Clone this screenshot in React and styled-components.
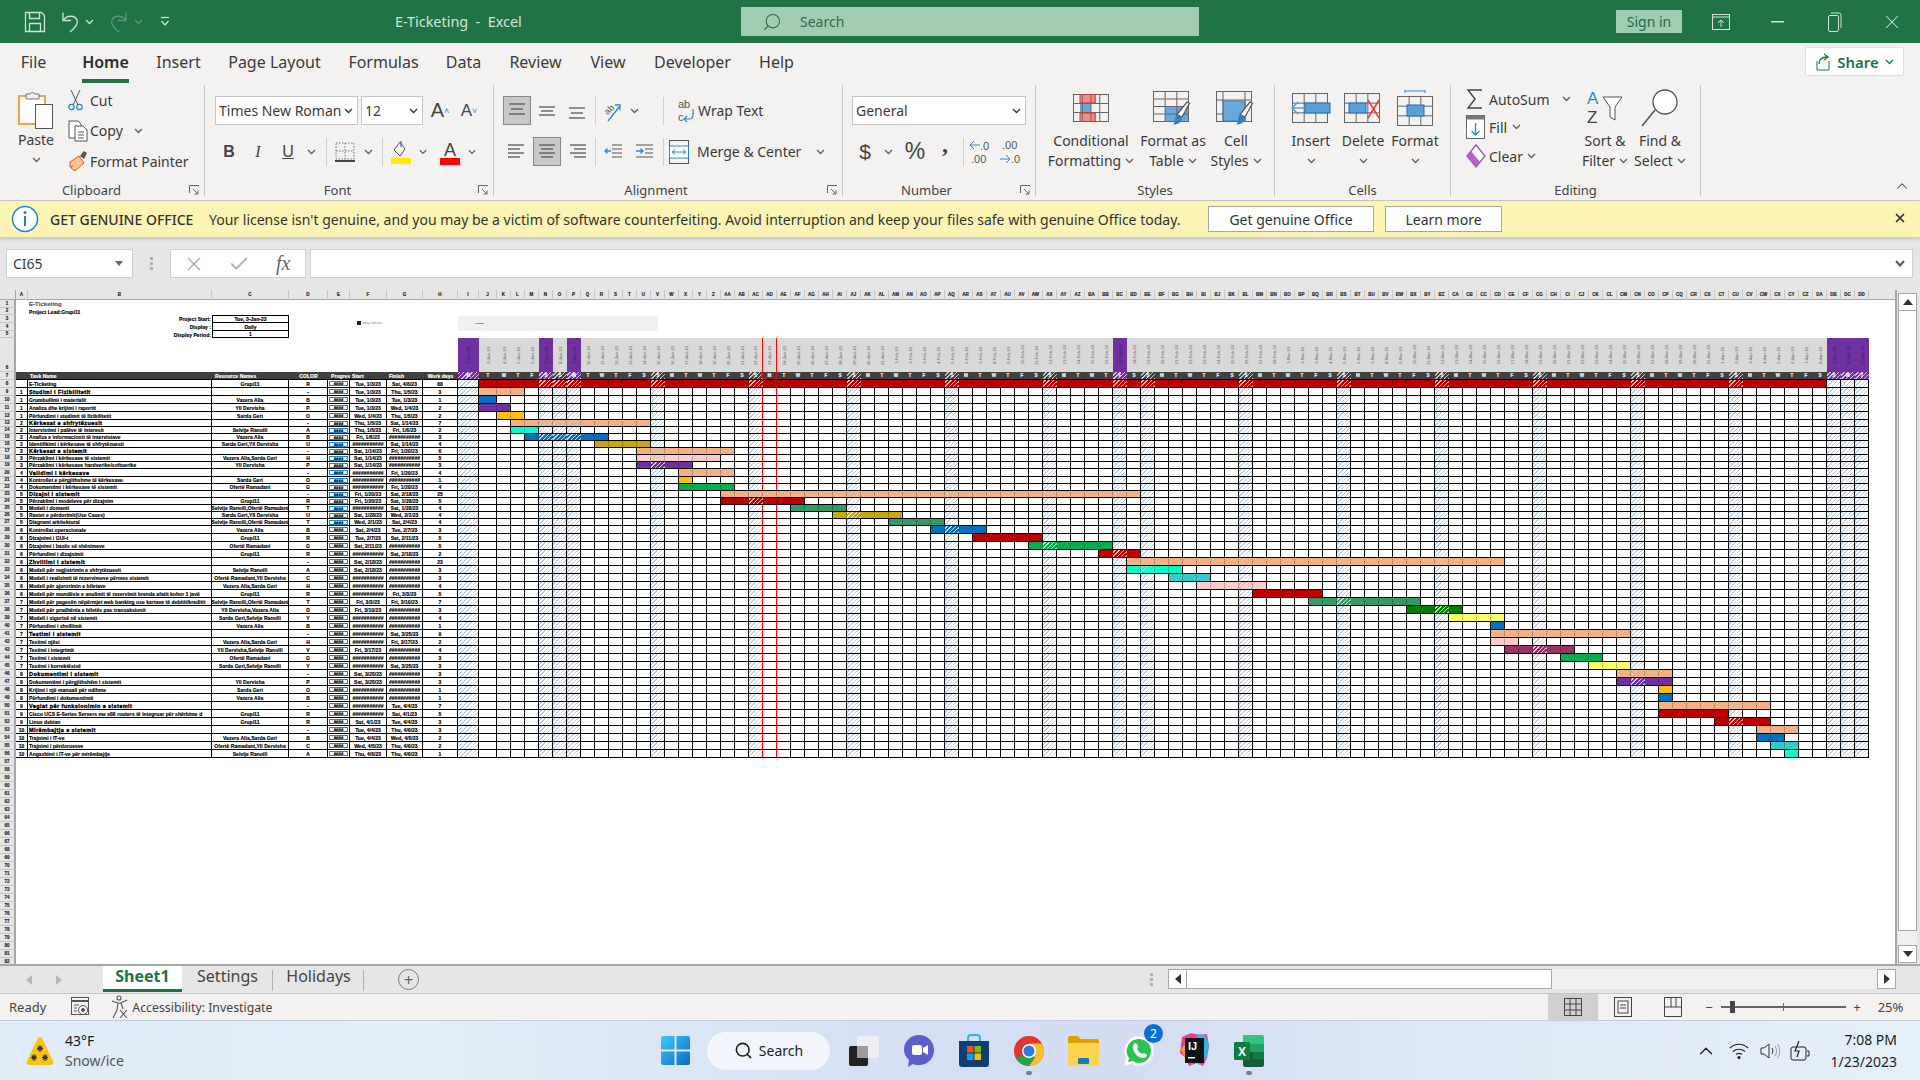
import React from 'react';
import styled, { createGlobalStyle, css } from 'styled-components';
import { X, Check, Search as SearchIcon, ChevronUp } from 'lucide-react';

const UI = `"Noto Sans", "Open Sans", sans-serif`;
const CELL = `"Liberation Sans", Arial, sans-serif`;

const GlobalStyle = createGlobalStyle`
  html, body { margin: 0; padding: 0; background: #fff; }
  * { box-sizing: border-box; }
  #root { width: 1920px; height: 1080px; overflow: hidden; }
`;

const Page = styled.div`
  width: 1920px; height: 1080px; display: flex; flex-direction: column;
  font-family: ${UI}; color: #3b3a39; overflow: hidden;
`;
const Spacer = styled.span`
  width: ${p => p.$w}px; flex: none;
`;

/* ---------- title bar ---------- */
const TitleBar = styled.div`
  height: 43px; flex: none; background: #217346; color: #d5e6dc; display: flex; align-items: center;
`;
const QuickAccess = styled.div`
  width: 395px; flex: none; padding-left: 24px; display: flex; align-items: center; gap: 5px;
`;
const TitleText = styled.div`
  width: 346px; flex: none; font-size: 14.4px; white-space: pre;
`;
const SearchBox = styled.div`
  width: 458px; height: 29px; flex: none; background: #a0cdb2; color: #2d6a48; display: flex; align-items: center;
  gap: 18px; padding-left: 21px; font-size: 14px;
`;
const MirroredSearch = styled(SearchIcon)`
  transform: scaleX(-1);
`;
const SignIn = styled.div`
  margin-left: auto; width: 66px; height: 23px; background: #a0cdb2; color: #1f6a42; font-size: 14px;
  display: flex; align-items: center; justify-content: center;
`;
const WinButton = styled.div`
  width: 57px; flex: none; display: flex; align-items: center; justify-content: center;
  margin-left: ${p => p.$ml || 0}px;
`;

/* ---------- ribbon ---------- */
const Ribbon = styled.div`
  height: 158px; flex: none; background: #f3f2f1; display: flex; flex-direction: column;
  border-bottom: 1px solid #c8c6c4;
`;
const TabRow = styled.div`
  height: 42px; flex: none; display: flex; align-items: center; padding-left: 21px; gap: 28px; position: relative;
`;
const RibbonTab = styled.div`
  width: ${p => p.$w}px; flex: none; margin-right: ${p => p.$mr || 0}px; height: 36px; margin-top: 1px; white-space: nowrap;
  font-size: 16px; line-height: 30px; display: flex; justify-content: center;
  ${p => p.$active && css`font-weight: 600; color: #2b2a29; border-bottom: 4px solid #217346;`}
`;
const ShareButton = styled.div`
  position: absolute; right: 16px; top: 4px; width: 99px; height: 29px; background: #fff; border: 1px solid #e1dfdd;
  border-radius: 2px; display: flex; align-items: center; justify-content: center; gap: 6px; color: #217346;
  font-size: 15px; font-weight: 600;
`;
const Groups = styled.div`
  flex: 1; display: flex; align-items: flex-start; position: relative;
`;
const Group = styled.div`
  width: ${p => p.$w}px; height: 111px; flex: none; display: flex; flex-direction: column; position: relative;
  border-right: 1px solid #c8c6c4; padding-left: ${p => p.$pl || 0}px;
`;
const GroupBody = styled.div`
  flex: 1; display: flex; flex-direction: ${p => (p.$col ? 'column' : 'row')}; min-height: 0;
`;
const GroupLabel = styled.div`
  height: 20px; flex: none; margin: 0 ${p => p.$pr || 0}px -4px ${p => -(p.$pl || 0)}px; text-align: center; font-size: 13px; line-height: 20px; color: #444;
`;
const Launcher = styled.svg`
  position: absolute; right: 4px; bottom: 0;
`;
const PasteColumn = styled.div`
  width: 48px; flex: none; display: flex; flex-direction: column; align-items: center; font-size: 14px; padding-top: 5px;
`;
const BigLabel = styled.div`
  height: 20px; line-height: 20px; white-space: nowrap; font-size: 14px; display: flex; align-items: center; gap: 4px; justify-content: center;
`;
const SmallColumn = styled.div`
  flex: none; width: ${p => p.$w}px; margin-left: ${p => p.$ml || 0}px; display: flex; flex-direction: column;
`;
const SmallRow = styled.div`
  height: ${p => p.$h || 29}px; flex: none; display: flex; align-items: center; font-size: 14px; white-space: nowrap;
`;
const IconSlot = styled.div`
  width: ${p => p.$w}px; flex: none; display: flex; align-items: center;
`;
const ToolRow = styled.div`
  height: 29px; flex: none; display: flex; align-items: center; margin-top: ${p => p.$mt || 0}px;
`;
const Ctl = styled.div`
  width: ${p => p.$w}px; height: 29px; flex: none; margin-left: ${p => p.$ml || 0}px; display: flex; align-items: center;
  justify-content: ${p => (p.$start ? 'flex-start' : 'center')}; padding-left: ${p => p.$pl || 0}px;
  font-size: 14px; white-space: nowrap;
  ${p => p.$active && css`background: #c8c8c8; border: 1px solid #8a8886;`}
`;
const Glyph = styled.span`
  font-family: ${p => (p.$serif ? '"Liberation Serif", serif' : CELL)}; font-size: ${p => p.$s || 15}px; font-weight: ${p => (p.$b ? 700 : 400)};
  font-style: ${p => (p.$i ? 'italic' : 'normal')}; text-decoration: ${p => (p.$u ? 'underline' : 'none')}; color: ${p => p.$c || '#444'};
`;
const CommaGlyph = styled(Glyph)`
  line-height: 20px; margin-bottom: 16px;
`;
const VSep = styled.div`
  width: 1px; height: 28px; flex: none; background: #d2d0ce; margin-left: ${p => p.$ml || 0}px;
`;
const SelectBox = styled.div`
  width: ${p => p.$w}px; height: 29px; flex: none; margin-left: ${p => p.$ml || 0}px; background: #fff; border: 1px solid #c8c6c4; display: flex; align-items: center;
  justify-content: space-between; padding: 0 4px 0 3px; font-size: 14px; white-space: nowrap;
`;
const BigButton = styled.div`
  width: ${p => p.$w}px; flex: none; margin-left: ${p => p.$ml || 0}px; display: flex; flex-direction: column; align-items: center;
`;
const BigIcon = styled.div`
  height: 46px; flex: none; display: flex; align-items: center; justify-content: center;
`;
const CollapseButton = styled.div`
  position: absolute; right: 9px; bottom: 5px; color: #444; display: flex;
`;

/* ---------- message bar ---------- */
const MessageBar = styled.div`
  height: 36px; flex: none; background: #fcf4b5; display: flex; align-items: center; padding-left: 11px; font-size: 14px; color: #333;
  box-shadow: 0 2px 3px rgba(0,0,0,.15); position: relative; white-space: nowrap; z-index: 1;
`;
const Strong = styled.span`
  font-weight: 500; margin-left: 11px; margin-right: 12px; width: 147px; flex: none;
`;
const MessageText = styled.span`
  width: 988px; flex: none;
`;
const MessageButton = styled.div`
  width: ${p => p.$w}px; height: 26px; flex: none; margin-left: ${p => p.$ml}px; background: #fff; border: 1px solid #a6a6a6;
  display: flex; align-items: center; justify-content: center;
`;
const MessageClose = styled.div`
  position: absolute; right: 13px; top: 10px; display: flex; color: #333;
`;

/* ---------- formula bar ---------- */
const FormulaBar = styled.div`
  height: 53px; flex: none; background: #e6e6e6; display: flex; align-items: flex-start; padding: 12px 7px 0 6px;
`;
const NameBox = styled.div`
  width: 127px; height: 29px; flex: none; background: #fff; border: 1px solid #d2d0ce; display: flex; align-items: center;
  justify-content: space-between; padding: 0 9px 0 6px; font-size: 14px;
`;
const Caret = styled.span`
  width: 0; height: 0; border-left: 4px solid transparent; border-right: 4px solid transparent; border-top: 5px solid #666;
`;
const Dots = styled.div`
  width: 37px; height: 29px; flex: none; display: flex; flex-direction: column; align-items: center; justify-content: center; gap: 2px;
  & > i { width: 3px; height: 3px; background: #b3b0ad; }
`;
const FxBox = styled.div`
  width: 136px; height: 29px; flex: none; background: #fff; border: 1px solid #d2d0ce; display: flex; align-items: center; gap: 23px;
  padding-left: 12px; color: #b3b0ad;
`;
const Fx = styled.span`
  font-family: "Liberation Serif", serif; font-style: italic; font-size: 20px; color: #666; margin-left: 3px;
`;
const FormulaInput = styled.div`
  flex: 1; height: 29px; margin-left: 4px; background: #fff; border: 1px solid #d2d0ce; display: flex; align-items: center; justify-content: flex-end; padding-right: 7px;
`;

/* ---------- sheet ---------- */
const SheetArea = styled.div`
  flex: 1; min-height: 0; display: flex; background: #e6e6e6;
`;
const Sheet = styled.div`
  width: 1895px; flex: none; background: #fff; display: flex; flex-direction: column; overflow: hidden; position: relative;
  font-family: ${CELL}; font-size: 5px; font-weight: 700; color: #000; -webkit-text-stroke-width: .15px; letter-spacing: .05px;
`;
const GridRow = styled.div`
  height: ${p => p.$h}px; flex: none; display: flex;
`;
const Corner = styled.div`
  width: 16px; flex: none; background: #e6e6e6; border-right: 1px solid #a6a6a6; border-bottom: 1px solid #a6a6a6;
`;
const ColHead = styled.div`
  width: ${p => p.$w}px; flex: none; background: #e6e6e6; border-right: 1px solid #c8c6c4; border-bottom: 1px solid #a6a6a6;
  display: flex; align-items: center; justify-content: center; font-size: 4.5px; overflow: hidden; color: #222;
`;
const ColFiller = styled.div`
  flex: 1; background: #e6e6e6; border-bottom: 1px solid #a6a6a6;
`;
const RowHead = styled.div`
  width: 16px; flex: none; background: #e6e6e6; border-right: 2px solid #a6a6a6; border-bottom: 1px solid #c8c6c4;
  display: flex; align-items: flex-end; justify-content: center; font-size: 4.5px; line-height: 6px; color: #222;
`;
const Plain = styled.div`
  width: ${p => p.$w}px; flex: none; display: flex; align-items: center; white-space: nowrap; overflow: visible; padding: 0 1px;
  justify-content: ${p => p.$align || 'flex-start'}; font-size: ${p => p.$fs || 5}px; color: ${p => p.$c || '#000'};
`;
const SetupBox = styled.div`
  width: ${p => p.$w}px; flex: none; border: 1px solid #000; border-top-width: ${p => (p.$first ? 1 : 0)}px; display: flex; align-items: center; justify-content: center;
`;
const Legend = styled.div`
  position: absolute; left: 357px; top: 31px; display: flex; align-items: center; gap: 1px; font-size: 3px; font-weight: 400; color: #888; -webkit-text-stroke-width: 0;
  & > i { width: 4px; height: 4px; background: #222; }
`;
const SliderBand = styled.div`
  position: absolute; left: 458px; top: 26px; width: 200px; height: 15px; background: #f0f0f0;
  & > i { position: absolute; left: 17px; top: 7px; width: 9px; height: 1px; background: #999; }
`;
const Cell = styled.div`
  width: ${p => p.$w}px; flex: none; display: flex; align-items: center; white-space: nowrap; overflow: hidden;
  border-right: 1px solid #000; border-bottom: 1px solid #000; padding: 0 1px;
  justify-content: ${p => p.$align || 'center'};
  ${p => p.$big && css`font-size: 5.5px; letter-spacing: .42px; -webkit-text-stroke-width: .3px;`}
`;
const DataBar = styled.div`
  flex: 1; height: 5px; border: 1px solid #0a8fe8; display: flex; align-items: center; justify-content: center; font-size: 4px; letter-spacing: .2px; overflow: hidden; background: #fff;
`;
const DarkCell = styled.div`
  width: ${p => p.$w}px; flex: none; background: #404040; color: #fff; display: flex; align-items: center; white-space: nowrap; overflow: hidden; padding: 0 1px;
  justify-content: ${p => p.$align || 'flex-start'}; padding-left: ${p => p.$pl || 1}px; border-bottom: 1px solid #000;
`;
const hatch = c => `repeating-linear-gradient(-45deg, ${c} 0 1px, transparent 1px 3px)`;
const DateCell = styled.div`
  width: ${p => p.$w}px; flex: none; background: ${p => (p.$holiday ? '#7030a0' : '#d9d9d9')};
  display: flex; align-items: center; justify-content: center; overflow: hidden; -webkit-text-stroke-width: 0;
  font-size: 4px; color: ${p => (p.$holiday ? '#3a2a60' : '#857d92')};
  ${p => p.$today && 'border-right: 1px solid #f00;'}
  & > span { writing-mode: vertical-rl; transform: rotate(180deg); white-space: nowrap; }
`;
const DayLetter = styled.div`
  width: ${p => p.$w}px; flex: none; background-color: ${p => (p.$holiday ? '#7030a0' : '#404040')}; color: #fff;
  background-image: ${p => (p.$hatch ? hatch('rgba(255,255,255,.7)') : 'none')};
  display: flex; align-items: center; justify-content: center; font-size: 4.5px; border-bottom: 1px solid #000;
  ${p => p.$today && 'border-right: 1px solid #f00;'}
`;
const DayCell = styled.div`
  width: ${p => p.$w}px; flex: none; border-bottom: 1px solid #000;
  border-right: 1px solid ${p => (p.$bar ? 'rgba(0,0,0,.22)' : p.$today ? '#f00' : '#000')};
  background-color: ${p => p.$bar || '#fff'};
  background-image: ${p => (p.$hatch ? hatch(p.$bar ? p.$hatchColor : '#bcd5ec') : 'none')};
  ${p => p.$end && 'border-right-color: #000;'}
`;

/* ---------- scrollbars ---------- */
const VScroll = styled.div`
  width: 25px; flex: none; border-left: 2px solid #a6a6a6; padding: 3px 0 1px 1px; display: flex; flex-direction: column;
`;
const ScrollButton = styled.div`
  width: 19px; height: ${p => p.$h || 18}px; flex: none; background: #fff; border: 1px solid #a6a6a6; display: flex; align-items: center; justify-content: center;
`;
const Triangle = styled.span`
  width: 0; height: 0; border-style: solid; border-color: transparent;
  ${p => p.$dir === 'up' && 'border-width: 0 5px 6px; border-bottom-color: #333;'}
  ${p => p.$dir === 'down' && 'border-width: 6px 5px 0; border-top-color: #333;'}
  ${p => p.$dir === 'left' && 'border-width: 5px 6px 5px 0; border-right-color: #333;'}
  ${p => p.$dir === 'right' && 'border-width: 5px 0 5px 6px; border-left-color: #333;'}
`;
const VThumb = styled.div`
  width: 19px; height: 620px; flex: none; background: #fff; border: 1px solid #a6a6a6; border-top: 0;
`;
const VTrack = styled.div`
  width: 19px; flex: 1; background: #f0f0f0;
`;

/* ---------- sheet tabs ---------- */
const TabsBar = styled.div`
  height: 29px; flex: none; background: #e6e6e6; border-top: 2px solid #a6a6a6; display: flex; align-items: flex-start; padding-right: 24px;
`;
const TabNav = styled.div`
  width: 103px; height: 27px; flex: none; display: flex; align-items: center; gap: 24px; padding-left: 26px; opacity: .25;
`;
const SheetTab = styled.div`
  width: ${p => p.$w}px; height: 26px; flex: none; display: flex; align-items: center; justify-content: center; font-size: 16px; color: #444; padding-bottom: 6px;
  ${p => p.$active && css`background: #fff; color: #217346; font-weight: 700; border-bottom: 3px solid #217346; padding-bottom: 3px;`}
  ${p => p.$sep && css`
    position: relative;
    &::after { content: ""; position: absolute; right: 0; top: 4px; height: 21px; width: 1px; background: #b3b0ad; }
  `}
`;
const AddSheet = styled.div`
  width: 21px; height: 21px; margin: 3px 0 0 34px; flex: none; border: 1.5px solid #7a7a7a; border-radius: 50%; display: flex; align-items: center; justify-content: center;
  font-size: 17px; line-height: 1; color: #666;
`;
const TabDots = styled.div`
  margin: 7px 15px 0 auto; display: flex; flex-direction: column; gap: 2px;
  & > i { width: 3px; height: 3px; background: #b3b0ad; }
`;
const HScroll = styled.div`
  width: 728px; height: 20px; margin-top: 3px; flex: none; background: #f0f0f0; display: flex; justify-content: space-between;
`;
const HLeft = styled.div`
  display: flex;
`;
const HButton = styled.div`
  width: 19px; flex: none; background: #fff; border: 1px solid #a6a6a6; display: flex; align-items: center; justify-content: center;
`;
const HThumb = styled.div`
  width: 365px; flex: none; background: #fff; border: 1px solid #a6a6a6; border-left: 0;
`;

/* ---------- status bar ---------- */
const StatusBar = styled.div`
  height: 27px; flex: none; background: #f3f2f1; border-top: 1px solid #c8c6c4; display: flex; align-items: center; font-size: 13px; padding: 0 17px 0 9px; color: #444;
`;
const StatusItem = styled.div`
  margin-left: ${p => p.$ml || 0}px; display: flex; align-items: center; gap: 3px; white-space: nowrap;
  ${p => p.$w && css`width: ${p.$w}px; flex: none; justify-content: center;`}
`;
const AccessText = styled.span`
  font-size: 12.3px;
`;
const ViewButtons = styled.div`
  margin-left: auto; display: flex;
`;
const ViewButton = styled.div`
  width: 50px; height: 26px; flex: none; display: flex; align-items: center; justify-content: center;
  ${p => p.$active && 'background: #d2d0ce;'}
`;
const ZoomSlider = styled.div`
  width: 125px; height: 2px; margin-left: 8px; background: #666; position: relative; flex: none;
  & > b { position: absolute; left: 9px; top: -5px; width: 5px; height: 12px; background: #444; }
  & > i { position: absolute; left: 62px; top: -3px; width: 1px; height: 8px; background: #666; }
`;

/* ---------- taskbar ---------- */
const Taskbar = styled.div`
  height: 60px; flex: none; display: flex; align-items: center; color: #1c1c1c;
  background: linear-gradient(90deg, #dfebf7 0%, #e3eef8 22%, #d5e0f5 45%, #d3dcf3 58%, #dfe8f6 75%, #e5f0f9 100%);
  border-top: 1px solid #c3ccd8;
`;
const Weather = styled.div`
  width: 647px; flex: none; display: flex; align-items: center; padding-left: 25px; gap: 10px;
`;
const WeatherText = styled.div`
  font-size: 14px; line-height: 20px; & > span { display: block; color: #555; }
`;
const TaskIcon = styled.div`
  width: ${p => p.$w || 55}px; height: 60px; flex: none; display: flex; align-items: center; justify-content: center; position: relative;
  ${p => p.$running && css`&::after { content: ""; position: absolute; bottom: 6px; left: 50%; margin-left: -3px; width: 6px; height: 4px; border-radius: 2px; background: #7a7f87; }`}
`;
const SearchPill = styled.div`
  width: 123px; height: 38px; margin: 0 6px 0 4px; flex: none; border-radius: 19px; background: #f2f6fc; display: flex; align-items: center; justify-content: center; gap: 6px;
  font-size: 14px;
`;
const Badge = styled.div`
  position: absolute; top: 3px; right: 3px; width: 19px; height: 19px; border-radius: 50%; background: #0a6fd0; color: #fff; font-size: 12px; display: flex; align-items: center; justify-content: center;
`;
const Tray = styled.div`
  margin-left: auto; display: flex; align-items: center; padding-right: 23px;
`;
const TrayIcon = styled.div`
  width: ${p => p.$w}px; flex: none; display: flex; justify-content: center;
`;
const Clock = styled.div`
  width: 73px; margin-left: 7px; text-align: right; font-size: 14px; line-height: 22px; white-space: nowrap;
`;

/* ---------- drawn icons ---------- */
const BLUE = '#2b88d8';
const Chevron = ({ c = '#605e5c' }) => (
  <svg width="9" height="6" viewBox="0 0 9 6"><polyline points="1,1 4.5,4.5 8,1" fill="none" stroke={c} strokeWidth="1.3" /></svg>
);
const Save = () => (
  <svg width="22" height="22" viewBox="0 0 22 22" fill="none" stroke="#cfe3d8" strokeWidth="1.3"><path d="M1.5 1.5h16l3 3v16h-19z" /><path d="M5.5 1.5v6h10v-6M5.5 20.5v-8h11v8" /></svg>
);
const Undo = ({ c = '#cfe3d8', flip }) => (
  <svg width="20" height="22" viewBox="0 0 20 22" fill="none" stroke={c} strokeWidth="1.3">
    <g transform={flip ? 'translate(20 0) scale(-1 1)' : undefined}><path d="M3 1.5v8h8" /><path d="M3.5 9C7 4 15 4 17 9c1.5 4-2 8-7 12" /></g>
  </svg>
);
const Customize = () => (
  <svg width="10" height="12" viewBox="0 0 10 12" fill="none" stroke="#cfe3d8" strokeWidth="1.2"><path d="M1 1.5h8" /><polyline points="1.5,5 5,9 8.5,5" /></svg>
);
const Launch = () => (
  <Launcher width="11" height="11" viewBox="0 0 11 11" fill="none" stroke="#666"><path d="M.5 8V.5H10" /><path d="M4 4l5 5M9 5.5V9H5.5" /></Launcher>
);
const PasteIcon = () => (
  <svg width="36" height="40" viewBox="0 0 36 40">
    <rect x="1" y="6" width="26" height="28" fill="#fff" stroke="#e8a54b" strokeWidth="2" />
    <path d="M8 9V4h4a3 3 0 0 1 5 0h4v5z" fill="#f3f2f1" stroke="#777" />
    <rect x="17.5" y="14.5" width="17" height="24" fill="#fff" stroke="#555" />
  </svg>
);
const CutIcon = () => (
  <svg width="15" height="22" viewBox="0 0 15 22" fill="none"><path d="M3 1l7 15M12 1L5 16" stroke="#555" /><circle cx="3.5" cy="18" r="2.7" stroke={BLUE} strokeWidth="1.3" /><circle cx="11.5" cy="18" r="2.7" stroke={BLUE} strokeWidth="1.3" /></svg>
);
const CopyIcon = () => (
  <svg width="21" height="22" viewBox="0 0 21 22" fill="#fff" stroke="#555"><path d="M1 1h9l3 3v14H1z" /><path d="M7 6h8l4 4v11H7z" /><path d="M10 12h6M10 15h6M10 18h6" /></svg>
);
const BrushIcon = () => (
  <svg width="20" height="22" viewBox="0 0 20 22"><path d="M2 12l9-6 5 7-9 8-4-3 2-2-3 1z" fill="#f9c58f" stroke="#d9601f" /><path d="M12 6l4-5 3 2-3 6z" fill="#555" /></svg>
);
const Lines = ({ rows, w = 20 }) => (
  <svg width={w} height="18" viewBox={`0 0 ${w} 18`} stroke="#555" strokeWidth="1.3">
    {rows.map(([a, b, y], i) => <line key={i} x1={a} x2={b} y1={y} y2={y} />)}
  </svg>
);
const OrientIcon = () => (
  <svg width="22" height="22" viewBox="0 0 22 22" fill="none">
    <text x="3" y="13" fontSize="9" fontFamily="Liberation Sans" fill="#555" transform="rotate(-45 7 11)">ab</text>
    <path d="M6 21L18 6M13 5h5v5" stroke={BLUE} strokeWidth="1.3" />
  </svg>
);
const WrapIcon = () => (
  <svg width="18" height="26" viewBox="0 0 18 26" fill="none">
    <text x="1" y="10" fontSize="11" fontFamily="Liberation Sans" fill="#555">ab</text>
    <text x="1" y="23" fontSize="11" fontFamily="Liberation Sans" fill="#555">c</text>
    <path d="M16 11v6q0 4-4 4H8M10 18l-3 3 3 3" stroke={BLUE} strokeWidth="1.2" />
  </svg>
);
const IndentIcon = ({ out }) => (
  <svg width="19" height="18" viewBox="0 0 19 18" fill="none">
    <path d={out ? 'M8 2h10M8 6h10M8 10h10M8 14h10' : 'M1 2h17M10 6h8M10 10h8M1 14h17'} stroke="#555" strokeWidth="1.2" />
    <path d={out ? 'M7 8H1M3.5 5.5L1 8l2.5 2.5' : 'M1 8h7M5.500 5.500L8 8l-2.500 2.500'} stroke={BLUE} strokeWidth="1.3" />
  </svg>
);
const MergeIcon = () => (
  <svg width="20" height="24" viewBox="0 0 20 24" fill="none"><rect x=".5" y=".5" width="19" height="23" stroke="#555" /><rect x=".5" y="6" width="19" height="12" fill="#fff" stroke={BLUE} /><path d="M3 12h14M6 9.5L3 12l3 2.5M14 9.5l3 2.5-3 2.5" stroke={BLUE} /></svg>
);
const BorderIcon = () => (
  <svg width="20" height="20" viewBox="0 0 20 20" fill="none"><path d="M1 1h18v16H1zM10 1v16M1 9h18" stroke="#777" strokeDasharray="1.5 1.5" /><path d="M0 19h20" stroke="#444" strokeWidth="2" /></svg>
);
const FillIcon = () => (
  <svg width="20" height="24" viewBox="0 0 20 24" fill="none"><path d="M9 2L3 10l6 6 5-7z" stroke="#555" /><path d="M10 1v6" stroke="#555" /><rect x="0" y="18" width="20" height="6" fill="#ffea00" /></svg>
);
const FontColor = () => (
  <svg width="20" height="26" viewBox="0 0 20 26"><text x="10" y="17" textAnchor="middle" fontSize="18" fontFamily="Liberation Sans" fill="#444">A</text><rect x="0" y="19" width="20" height="7" fill="#f00" /></svg>
);
const DecIcon = ({ inc }) => (
  <svg width="22" height="26" viewBox="0 0 22 26" fontSize="11" fontFamily="Liberation Sans" fill="#555">
    {inc ? <><text x="3" y="10">.00</text><text x="12" y="24">.0</text><path d="M1 20h10M7 16l4 4-4 4" fill="none" stroke={BLUE} /></>
      : <><path d="M12 6H2M6 2L2 6l4 4" fill="none" stroke={BLUE} /><text x="12" y="11">.0</text><text x="3" y="24">.00</text></>}
  </svg>
);
const TableGrid = ({ x = 0, y = 0, w, h, cols, rows }) => (
  <g stroke="#666" fill="none">
    <rect x={x + .5} y={y + .5} width={w} height={h} />
    {Array.from({ length: cols - 1 }, (_, i) => <line key={i} x1={x + .5 + (w * (i + 1)) / cols} x2={x + .5 + (w * (i + 1)) / cols} y1={y} y2={y + h} />)}
    {Array.from({ length: rows - 1 }, (_, i) => <line key={i} y1={y + .5 + (h * (i + 1)) / rows} y2={y + .5 + (h * (i + 1)) / rows} x1={x} x2={x + w} />)}
  </g>
);
const MiniBrush = ({ x, y }) => (
  <g transform={`translate(${x} ${y}) scale(1.25)`}><path d="M12 0l2 1-6 11-4-2z" fill="#fff" stroke="#555" /><path d="M4 10l4 2c0 4-3 6-7 6 2-2 1-6 3-8z" fill="#2f7fc1" /></g>
);
const CondIcon = () => (
  <svg width="36" height="28" viewBox="0 0 36 28">
    <rect x="7" y="0" width="16" height="9" fill="#f98a8a" /><rect x="7" y="19" width="16" height="9" fill="#f98a8a" /><rect x="7" y="10" width="11" height="9" fill="#6aa7dc" />
    <TableGrid w={35} h={27} cols={4} rows={3} />
    <path d="M7 0h15v9H7zM7 19h15v9H7z" fill="none" stroke="#d33" />
  </svg>
);
const TableIcon = () => (
  <svg width="40" height="36" viewBox="0 0 40 36">
    <rect x="12" y="16" width="23" height="15" fill="#6aa7dc" />
    <TableGrid y={1} w={35} h={30} cols={3} rows={4} />
    <MiniBrush x={19} y={12} />
  </svg>
);
const StylesIcon = () => (
  <svg width="40" height="36" viewBox="0 0 40 36">
    <rect x="7" y="11" width="22" height="20" fill="#6aa7dc" stroke={BLUE} />
    <rect x=".5" y="1.5" width="35" height="30" fill="none" stroke="#666" />
    <path d="M7 1v30M29 1v30M0 10h36M0 24h7" stroke="#666" fill="none" />
    <MiniBrush x={19} y={12} />
  </svg>
);
const InsertIcon = () => (
  <svg width="40" height="30" viewBox="0 0 40 30">
    <TableGrid w={35} h={29} cols={3} rows={3} x={1} />
    <rect x="14" y="10" width="25" height="10" fill="#5ba0d8" stroke="#1f6eb5" />
    <path d="M14 15H1M7 9l-6 6 6 6" fill="none" stroke="#5ba0d8" strokeWidth="1.5" />
  </svg>
);
const DeleteIcon = () => (
  <svg width="38" height="30" viewBox="0 0 38 30">
    <TableGrid w={35} h={29} cols={3} rows={3} />
    <rect x="5" y="10" width="17" height="10" fill="#5ba0d8" stroke="#1f6eb5" />
    <path d="M24 7l11 18M35 7L24 25" stroke="#ee3a3a" strokeWidth="1.5" />
  </svg>
);
const FormatIcon = () => (
  <svg width="36" height="36" viewBox="0 0 36 36">
    <path d="M8 1h20M8 0v3M28 0v3" stroke={BLUE} fill="none" />
    <TableGrid y={6} w={35} h={29} cols={3} rows={3} />
    <rect x="10" y="15" width="17" height="11" fill="#5ba0d8" stroke="#1f6eb5" />
  </svg>
);
const SigmaIcon = () => (
  <svg width="17" height="20" viewBox="0 0 17 20" fill="none" stroke="#444" strokeWidth="1.4"><path d="M15 2V1H2l7 9-7 9h13v-1" /></svg>
);
const FillDown = () => (
  <svg width="19" height="24" viewBox="0 0 19 24" fill="none"><rect x=".5" y=".5" width="18" height="23" fill="#fff" stroke="#666" /><rect x=".5" y=".5" width="18" height="4" fill="#777" /><path d="M9.5 8v12M5.5 16l4 4 4-4" stroke={BLUE} strokeWidth="1.3" /></svg>
);
const ClearIcon = () => (
  <svg width="20" height="24" viewBox="0 0 20 24" fill="none"><path d="M10 1l9 11-9 11-9-11z" stroke="#a24ab4" strokeWidth="1.3" fill="#fff" /><path d="M5 7l9 11-4 5-9-11z" fill="#b661c8" /></svg>
);
const SortIcon = () => (
  <svg width="38" height="38" viewBox="0 0 38 38" fontFamily="Liberation Sans" fontSize="17">
    <text x="1" y="15" fill={BLUE}>A</text><text x="1" y="34" fill="#444">Z</text>
    <path d="M17 8h19l-7 10v13l-5-3V18z" fill="#fff" stroke="#555" />
  </svg>
);
const FindIcon = () => (
  <svg width="40" height="38" viewBox="0 0 40 38" fill="none" stroke="#555"><circle cx="25" cy="13" r="12" fill="#fff" strokeWidth="1.3" /><path d="M15 21L2 37" strokeWidth="1.6" /></svg>
);
const InfoIcon = () => (
  <svg width="28" height="28" viewBox="0 0 28 28" fill="#fff" stroke="#1a86d0" strokeWidth="1.5"><circle cx="14" cy="14" r="12.5" /><path d="M14 11v10" strokeWidth="2" /><circle cx="14" cy="7.5" r=".8" strokeWidth="1.5" /></svg>
);
const ShareIcon = () => (
  <svg width="16" height="19" viewBox="0 0 16 19" fill="none" stroke="#217346"><path d="M2 9v9h12V9" /><path d="M4 12c0-5 3-7 8-7M9 2l4 3-4 3" strokeWidth="1.3" /></svg>
);
const WinGrid = () => (
  <svg width="18" height="18" viewBox="0 0 18 18" fill="none" stroke="#444"><rect x=".5" y=".5" width="17" height="17" /><path d="M6 0v18M12 0v18M0 6h18M0 12h18" /></svg>
);
const PageIcon = () => (
  <svg width="18" height="20" viewBox="0 0 18 20" fill="none" stroke="#444"><rect x=".5" y=".5" width="17" height="19" /><rect x="4" y="4" width="10" height="12" /><path d="M6 8h6M6 11h6" /></svg>
);
const BreakIcon = () => (
  <svg width="18" height="20" viewBox="0 0 18 20" fill="none" stroke="#444"><path d="M.5.5h17v19H.5zM.5 10h17M7 .5V10M12 .5V10" /></svg>
);
const MacroIcon = () => (
  <svg width="18" height="20" viewBox="0 0 18 20" fill="none" stroke="#555"><rect x=".5" y=".5" width="17" height="17" /><path d="M0 4h18" strokeWidth="2" /><path d="M3 8h5M3 11h3M3 14h3" /><circle cx="12" cy="13" r="4.5" fill="#f3f2f1" /><circle cx="12" cy="13" r="1.5" fill="#555" /></svg>
);
const AccessIcon = () => (
  <svg width="18" height="24" viewBox="0 0 18 24" fill="none" stroke="#555" strokeWidth="1.1"><circle cx="8" cy="3" r="2" /><path d="M1 6l6 2h3l6-3M7 8l-1 7-4 8M10 8l2 6" /><path d="M9 15l7 8M16 15l-7 8" /></svg>
);
const WeatherIcon = () => (
  <svg width="30" height="30" viewBox="0 0 30 30"><path d="M15 1c1.500 0 2 1 3 3l10 21c1 2 0 4-2 4H4c-2 0-3-2-2-4L12 4c1-2 1.500-3 3-3z" fill="#f7c413" /><g stroke="#333" strokeWidth="1.1"><path d="M15 9v7M12 12.5h6M12.8 10.5l4.4 4M17.2 10.500l-4.400 4" /><path d="M9 18v7M6 21.5h6M6.8 19.5l4.4 4M11.2 19.5l-4.4 4" /><path d="M20 18v7M17 21.5h6M17.8 19.5l4.4 4M22.2 19.5l-4.4 4" /></g></svg>
);
const WinLogo = () => (
  <svg width="29" height="29" viewBox="0 0 29 29">
    <defs><linearGradient id="wl" x1="0" y1="0" x2="1" y2="1"><stop offset="0" stopColor="#3fc9f7" /><stop offset="1" stopColor="#0a6cc9" /></linearGradient></defs>
    <path d="M2 0h11.5v13.5H0V2a2 2 0 0 1 2-2zM15.5 0H27a2 2 0 0 1 2 2v11.5H15.5zM0 15.5h13.5V29H2a2 2 0 0 1-2-2zM15.5 15.5H29V27a2 2 0 0 1-2 2H15.5z" fill="url(#wl)" />
  </svg>
);
const TaskView = () => (
  <svg width="30" height="30" viewBox="0 0 30 30"><rect x="0" y="10" width="19" height="20" rx="2" fill="#222" /><rect x="8" y="0" width="22" height="22" rx="2" fill="#eceef2" /><rect x="8" y="10" width="11" height="12" fill="#9a9ca0" /></svg>
);
const Teams = () => (
  <svg width="30" height="32" viewBox="0 0 30 32"><path d="M15 0c8 0 15 6 15 15s-7 15-15 15c-2 0-4 0-6-1l-5 3 1-7C2 22 0 19 0 15 0 6 7 0 15 0z" fill="#5b5fc7" /><rect x="8" y="10" width="10" height="10" rx="2" fill="#fff" /><path d="M19 13l5-3v10l-5-3z" fill="#fff" /></svg>
);
const Store = () => (
  <svg width="30" height="34" viewBox="0 0 30 34"><path d="M9 8V4a3 3 0 0 1 3-3h6a3 3 0 0 1 3 3v4" fill="none" stroke="#2fb4f0" strokeWidth="2" /><path d="M0 7h30v23a3 3 0 0 1-3 3H3a3 3 0 0 1-3-3z" fill="#0e3e73" /><rect x="8" y="12" width="6.5" height="6.5" fill="#f25022" /><rect x="15.5" y="12" width="6.5" height="6.5" fill="#7fba00" /><rect x="8" y="19.5" width="6.5" height="6.5" fill="#00a4ef" /><rect x="15.5" y="19.5" width="6.5" height="6.5" fill="#ffb900" /></svg>
);
const Chrome = () => (
  <svg width="30" height="30" viewBox="0 0 30 30"><circle cx="15" cy="15" r="15" fill="#e0362c" /><path d="M15 30a15 15 0 0 0 13-22.5H15z" fill="#fbc02d" /><path d="M15 15L2 22.5a15 15 0 0 0 13 7.5l6-8z" fill="#2e9e48" /><circle cx="15" cy="15" r="7" fill="#fff" /><circle cx="15" cy="15" r="5.5" fill="#2f7be5" /></svg>
);
const Explorer = () => (
  <svg width="31" height="30" viewBox="0 0 31 30"><path d="M0 2a2 2 0 0 1 2-2h8l3 3h16a2 2 0 0 1 2 2v5H0z" fill="#e0a100" /><path d="M0 7h31v21a2 2 0 0 1-2 2H2a2 2 0 0 1-2-2z" fill="#ffd34f" /><rect x="10" y="22" width="11" height="6" rx="1" fill="#1379c9" /></svg>
);
const Whatsapp = () => (
  <svg width="31" height="32" viewBox="0 0 31 32"><path d="M16 1a15 15 0 0 1 0 30c-3 0-5-1-7-2l-8 2 2-8A15 15 0 0 1 16 1z" fill="#fff" stroke="#e6e6e6" /><path d="M16 4a12 12 0 0 1 0 24c-2 0-5-1-6-2l-5 1 1-4A12 12 0 0 1 16 4z" fill="#2cc353" /><path d="M11 9c1-1 2-1 3 0l1 3-1 2c1 2 3 4 5 5l2-1 3 2c0 2-2 3-4 3-5 0-10-6-10-10 0-2 0-3 1-4z" fill="#fff" /></svg>
);
const IdeaIcon = () => (
  <svg width="30" height="36" viewBox="0 0 30 36" fontFamily="Liberation Sans" fontWeight="700" fontSize="11">
    <path d="M3 4L12 0l8 2 8-1 2 12-2 12-4 8-6-3-8 3-3-8-6-5z" fill="#ee3c8e" /><path d="M18 1l8 1 4 10-3 14-8 6z" fill="#2fb4f0" /><path d="M2 16l5-6v18z" fill="#f9a000" />
    <rect x="6" y="5" width="19" height="25" fill="#111" /><text x="9" y="17" fill="#fff">IJ</text><rect x="9" y="24" width="7" height="1.5" fill="#fff" />
  </svg>
);
const ExcelIcon = () => (
  <svg width="30" height="32" viewBox="0 0 30 32" fontFamily="Liberation Sans" fontWeight="700" fontSize="12">
    <path d="M9 0h19a2 2 0 0 1 2 2v7H9z" fill="#33c481" /><rect x="19" y="9" width="11" height="8" fill="#21a366" /><rect x="9" y="9" width="10" height="8" fill="#21a366" /><rect x="19" y="17" width="11" height="7" fill="#107c41" /><rect x="9" y="17" width="10" height="7" fill="#185c37" /><path d="M9 24h21v6a2 2 0 0 1-2 2H11a2 2 0 0 1-2-2z" fill="#185c37" />
    <rect x="0" y="7" width="16" height="18" rx="1.5" fill="#107c41" /><text x="8" y="20.5" textAnchor="middle" fill="#fff">X</text>
  </svg>
);
const Wifi = () => (
  <svg width="20" height="18" viewBox="0 0 20 18" fill="none" stroke="#222" strokeWidth="1.2"><path d="M1 6c5-5 13-5 18 0M4 9.5c3.5-3 8.5-3 12 0M7 12.5c2-1.5 4-1.5 6 0" /><circle cx="10" cy="15.5" r="1" fill="#222" /></svg>
);
const Speaker = () => (
  <svg width="20" height="20" viewBox="0 0 20 20" fill="none" stroke="#333"><path d="M1 7v6h3l5 4V3L4 7z" /><path d="M12 7c1 2 1 4 0 6" /><path d="M15 5c2 3 2 7 0 10M17.5 3c3 4 3 10 0 14" stroke="#999" /></svg>
);
const Battery = () => (
  <svg width="20" height="22" viewBox="0 0 20 22" fill="none" stroke="#222"><rect x="1" y="7" width="15" height="13" rx="2" /><path d="M17 11h2v5h-2" /><path d="M9 1L5 11h4l-2 6" strokeWidth="1.2" /></svg>
);

/* ---------- data ---------- */
const COLS = [12, 184, 77, 39, 22, 37, 36, 35];
const NAMES = 'ABCDEFGHIJKLMNOPQRSTUVWXYZ';
const colName = i => (i < 26 ? NAMES[i] : NAMES[Math.floor(i / 26) - 1] + NAMES[i % 26]);
const DAY_COUNT = 100;
const dayW = k => (k === 0 ? 21 : k === 1 ? 18 : 14);
const HOLIDAYS = [0, 5, 7, 46, 97, 98, 99];
const isSunday = k => k % 7 === 6;
const isHatched = k => isSunday(k) || HOLIDAYS.includes(k);
const DAYS = Array.from({ length: DAY_COUNT }, (_, k) => {
  const d = new Date(Date.UTC(2023, 0, 2 + k));
  const mon = ['Jan', 'Feb', 'Mar', 'Apr'][d.getUTCMonth()];
  return { k, w: dayW(k), label: `${d.getUTCDate()}-${mon}-23`, letter: 'MTWTFSS'[k % 7] };
});
const isToday = k => k === 20 || k === 21;

const BAR = {
  R: '#c00000', B: '#0070c0', P: '#7030a0', O: '#ffc000', A: '#00ffcc', U: '#c9a800', H: '#ffcccc',
  G: '#00b050', T: '#339966', C: '#33cccc', D: '#008000', Y: '#ffff66', V: '#993366', '-': '#f4b183',
};
const hatchOn = l => (['-', 'H', 'Y', 'O', 'A'].includes(l) ? 'rgba(215,195,185,.9)' : 'rgba(255,255,255,.75)');

const H = '###########';
const VA = 'Vazera Alia', YD = 'Yll Dervisha', SG = 'Sarda Geri', SR = 'Selvije Ranolli', OR = 'Ofertë Ramadani', GR = 'Grupi11';
// [nr, task, resource, colour letter, start, finish, work days, first day, last day]
const TASKS = [
  ['', 'E-Ticketing', GR, 'R', 'Tue, 1/3/23', 'Sat, 4/8/23', '88', 1, 96],
  [1, 'Studimi i Fizibilitetit', '', '-', 'Tue, 1/3/23', 'Thu, 1/5/23', '3', 1, 3],
  [1, 'Grumbullimi i materialit', VA, 'B', 'Tue, 1/3/23', 'Tue, 1/3/23', '1', 1, 1],
  [1, 'Analiza dhe krijimi i raportit', YD, 'P', 'Tue, 1/3/23', 'Wed, 1/4/23', '2', 1, 2],
  [1, 'Përfundimi i studimit të fizibilitetit', SG, 'O', 'Wed, 1/4/23', 'Thu, 1/5/23', '2', 2, 3],
  [2, 'Kërkesat e shfrytëzuesit', '', '-', 'Thu, 1/5/23', 'Sat, 1/14/23', '7', 3, 12],
  [2, 'Intervistimi i palëve të interesit', SR, 'A', 'Thu, 1/5/23', 'Fri, 1/6/23', '2', 3, 4],
  [2, 'Analiza e informacionit të intervistave', VA, 'B', 'Fri, 1/6/23', H, '3', 4, 9],
  [2, 'Identifikimi i kërkesave të shfrytëzuesit', `${SG},${YD}`, 'U', H, 'Sat, 1/14/23', '4', 9, 12],
  [3, 'Kërkesat e sistemit', '', '-', 'Sat, 1/14/23', 'Fri, 1/20/23', '6', 12, 18],
  [3, 'Përzaklimi i kërkesave të sistemit', `${VA},${SG}`, 'H', 'Sat, 1/14/23', H, '5', 12, 17],
  [3, 'Përzaklimi i kërkesave hardverike/softuerike', YD, 'P', 'Sat, 1/14/23', H, '3', 12, 15],
  [4, 'Validimi i kërkesave', '', '-', H, 'Fri, 1/20/23', '4', 15, 18],
  [4, 'Kontrollet e përgjithshme të kërkesave', SG, 'O', H, H, '1', 15, 15],
  [4, 'Dokumentimi i kërkesave të sistemit', OR, 'G', H, 'Fri, 1/20/23', '4', 15, 18],
  [5, 'Dizajni i sistemit', '', '-', 'Fri, 1/20/23', 'Sat, 2/18/23', '25', 18, 47],
  [5, 'Përzaklimi i modeleve për dizajnim', GR, 'R', 'Fri, 1/20/23', 'Sat, 1/28/23', '5', 18, 23],
  [5, 'Modeli i domenit', `${SR},${OR}`, 'T', H, 'Sat, 1/28/23', '4', 23, 26],
  [5, 'Rastet e përdorimit(Use Cases)', `${SG},${YD}`, 'U', 'Sat, 1/28/23', 'Wed, 2/1/23', '4', 26, 30],
  [5, 'Diagrami arkitektural', `${SR},${OR}`, 'T', 'Wed, 2/1/23', 'Sat, 2/4/23', '4', 30, 33],
  [6, 'Kontrollat operacionale', VA, 'B', 'Sat, 2/4/23', 'Tue, 2/7/23', '3', 33, 36],
  [6, 'Dizajnimi i GUI-t', GR, 'R', 'Tue, 2/7/23', 'Sat, 2/11/23', '5', 36, 40],
  [6, 'Dizajnimi i bazës së shënimeve', OR, 'G', 'Sat, 2/11/23', H, '5', 40, 45],
  [6, 'Përfundimi i dizajnimit', GR, 'R', H, 'Sat, 2/18/23', '2', 45, 47],
  [6, 'Zhvillimi i sistemit', '', '-', 'Sat, 2/18/23', H, '23', 47, 73],
  [6, 'Modeli për regjistrimin e shfrytëzuesit', SR, 'A', 'Sat, 2/18/23', H, '3', 47, 50],
  [6, 'Modeli i realizimit të rezervimeve përmes sistemit', `${OR},${YD}`, 'C', H, H, '3', 50, 52],
  [6, 'Modeli për ajurorimin e biletave', `${VA},${SG}`, 'H', H, H, '4', 52, 56],
  [6, 'Modeli për mundësie e anulimit të rezervimit brenda afatit kohor 1 javë', GR, 'R', H, 'Fri, 3/3/23', '5', 56, 60],
  [7, 'Modeli për pagesën nëpërmjet web banking ose kartave të debitit/kreditit', `${SR},${OR}`, 'T', 'Fri, 3/3/23', 'Fri, 3/10/23', '7', 60, 67],
  [7, 'Modeli për pradhënia e biletës pas transaksionit', `${YD},${VA}`, 'D', 'Fri, 3/10/23', H, '3', 67, 70],
  [7, 'Modeli i sigurisë në sistemit', `${SG},${SR}`, 'Y', H, H, '4', 70, 73],
  [7, 'Përfundimi i zhvillimit', VA, 'B', H, H, '1', 73, 73],
  [7, 'Testimi i sistemit', '', '-', H, 'Sat, 3/25/23', '9', 73, 82],
  [7, 'Testimi njësi', `${VA},${SG}`, 'H', H, 'Fri, 3/17/23', '2', 73, 74],
  [7, 'Testimi i integrimit', `${YD},${SR}`, 'V', 'Fri, 3/17/23', H, '4', 74, 78],
  [7, 'Testimi i sistemit', OR, 'G', H, H, '3', 78, 80],
  [7, 'Testimi i korrektësisë', `${SG},${SR}`, 'Y', H, 'Sat, 3/25/23', '3', 80, 82],
  [8, 'Dokumentimi i sistemit', '', '-', 'Sat, 3/25/23', H, '3', 82, 85],
  [8, 'Dokumentimi i përgjithshëm i sistemit', YD, 'P', 'Sat, 3/25/23', H, '3', 82, 85],
  [8, 'Krijimi i një manuali për ndihme', SG, 'O', H, H, '1', 85, 85],
  [8, 'Përfundimi i dokumentimit', VA, 'B', H, H, '1', 85, 85],
  [9, 'Veglat për funksionimin e sistemit', '', '-', H, 'Tue, 4/4/23', '7', 85, 92],
  [9, 'Cisco UCS E-Series Servers me x86 routers të integruar për shërbime d', GR, 'R', H, 'Sat, 4/1/23', '5', 85, 89],
  [9, 'Linux debian', GR, 'R', 'Sat, 4/1/23', 'Tue, 4/4/23', '3', 89, 92],
  [10, 'Mirëmbajtja e sistemit', '', '-', 'Tue, 4/4/23', 'Thu, 4/6/23', '3', 92, 94],
  [10, 'Trajnimi i IT-ve', `${VA},${SG}`, 'B', 'Tue, 4/4/23', 'Wed, 4/5/23', '2', 92, 93],
  [10, 'Trajnimi i përdoruesve', `${OR},${YD}`, 'C', 'Wed, 4/5/23', 'Thu, 4/6/23', '2', 93, 94],
  [10, 'Angazhimi i IT-ve për mirëmbajtje', SR, 'A', 'Thu, 4/6/23', 'Thu, 4/6/23', '1', 94, 94],
];
const rowHeight = i => (i < 5 || i === 12 ? 8 : i < 20 ? 7 : 8);

/* ---------- parts ---------- */
const TABS = [['File', 25, 8], ['Home', 47], ['Insert', 43], ['Page Layout', 93], ['Formulas', 69], ['Data', 35], ['Review', 53], ['View', 36], ['Developer', 77], ['Help', 35]];

function TitleRow() {
  return (
    <TitleBar>
      <QuickAccess>
        <Save />
        <Spacer $w={4} />
        <Undo />
        <Chevron c="#cfe3d8" />
        <Spacer $w={5} />
        <Undo c="#5a9a78" flip />
        <Chevron c="#5a9a78" />
        <Spacer $w={7} />
        <Customize />
      </QuickAccess>
      <TitleText>E-Ticketing  -  Excel</TitleText>
      <SearchBox><MirroredSearch size={20} strokeWidth={1.3} />Search</SearchBox>
      <SignIn>Sign in</SignIn>
      <WinButton $ml={10}>
        <svg width="18" height="18" viewBox="0 0 18 18" fill="none" stroke="#cfe3d8"><rect x=".5" y="1.5" width="17" height="15" /><path d="M0 4h18M9 14V7M6 10l3-3 3 3" /></svg>
      </WinButton>
      <WinButton><svg width="13" height="2" viewBox="0 0 13 2"><rect width="13" height="1.5" fill="#cfe3d8" /></svg></WinButton>
      <WinButton>
        <svg width="14" height="20" viewBox="0 0 14 20" fill="none" stroke="#cfe3d8"><rect x=".5" y="3.5" width="10" height="16" rx="1.5" /><path d="M3 1h8a2 2 0 0 1 2 2v13" /></svg>
      </WinButton>
      <WinButton><X size={22} strokeWidth={1.1} color="#cfe3d8" /></WinButton>
    </TitleBar>
  );
}

function RibbonArea() {
  return (
    <Ribbon>
      <TabRow>
        {TABS.map(([t, w, mr], i) => <RibbonTab key={t} $w={w} $mr={mr} $active={i === 1}>{t}</RibbonTab>)}
        <ShareButton><ShareIcon />Share<Chevron c="#217346" /></ShareButton>
      </TabRow>
      <Groups>
        <Group $w={205} $pl={12}>
          <GroupBody>
            <PasteColumn><PasteIcon /><BigLabel>Paste</BigLabel><BigLabel><Chevron /></BigLabel></PasteColumn>
            <SmallColumn $w={135} $ml={8}>
              <SmallRow $h={30}><IconSlot $w={22}><CutIcon /></IconSlot>Cut</SmallRow>
              <SmallRow $h={31}><IconSlot $w={22}><CopyIcon /></IconSlot>Copy<Spacer $w={11} /><Chevron /></SmallRow>
              <SmallRow $h={30}><IconSlot $w={22}><BrushIcon /></IconSlot>Format Painter</SmallRow>
            </SmallColumn>
          </GroupBody>
          <GroupLabel $pl={12} $pr={21}>Clipboard</GroupLabel>
          <Launch />
        </Group>

        <Group $w={289} $pl={10}>
          <GroupBody $col>
            <ToolRow $mt={11}>
              <SelectBox $w={143}><span>Times New Roman</span><Chevron c="#333" /></SelectBox>
              <SelectBox $w={62} $ml={3}><span>12</span><Chevron c="#333" /></SelectBox>
              <Ctl $w={26} $ml={4}><Glyph $s={20}>A</Glyph><Glyph $s={9} $c="#2b88d8">˄</Glyph></Ctl>
              <Ctl $w={26} $ml={3}><Glyph $s={17}>A</Glyph><Glyph $s={9} $c="#2b88d8">˅</Glyph></Ctl>
            </ToolRow>
            <ToolRow $mt={12}>
              <Ctl $w={28}><Glyph $b $s={16}>B</Glyph></Ctl>
              <Ctl $w={30}><Glyph $i $s={16} $serif>I</Glyph></Ctl>
              <Ctl $w={30}><Glyph $u $s={16}>U</Glyph></Ctl>
              <Ctl $w={16}><Chevron /></Ctl>
              <VSep $ml={7} />
              <Ctl $w={36}><BorderIcon /></Ctl>
              <Ctl $w={10}><Chevron /></Ctl>
              <VSep $ml={9} />
              <Ctl $w={36}><FillIcon /></Ctl>
              <Ctl $w={8}><Chevron /></Ctl>
              <Ctl $w={36} $ml={5}><FontColor /></Ctl>
              <Ctl $w={8}><Chevron /></Ctl>
            </ToolRow>
          </GroupBody>
          <GroupLabel $pl={10} $pr={23}>Font</GroupLabel>
          <Launch />
        </Group>

        <Group $w={349} $pl={9}>
          <GroupBody $col>
            <ToolRow $mt={11}>
              <Ctl $w={28} $active><Lines rows={[[2, 18, 2], [4, 16, 7], [2, 18, 12]]} /></Ctl>
              <Ctl $w={32}><Lines rows={[[2, 18, 5], [4, 16, 9], [2, 18, 13]]} /></Ctl>
              <Ctl $w={28}><Lines rows={[[2, 18, 6], [4, 16, 11], [2, 18, 16]]} /></Ctl>
              <VSep $ml={4} />
              <Ctl $w={33}><OrientIcon /></Ctl>
              <Ctl $w={10}><Chevron /></Ctl>
              <VSep $ml={24} />
              <Ctl $w={30} $ml={1} $pl={12}><WrapIcon /></Ctl>
              <Ctl $w={80} $ml={3} $start>Wrap Text</Ctl>
            </ToolRow>
            <ToolRow $mt={12}>
              <Ctl $w={28}><Lines rows={[[1, 17, 2], [1, 13, 6], [1, 17, 10], [1, 13, 14]]} /></Ctl>
              <Ctl $w={28} $ml={2} $active><Lines rows={[[2, 18, 2], [4, 16, 6], [2, 18, 10], [4, 16, 14]]} /></Ctl>
              <Ctl $w={28} $ml={2}><Lines rows={[[3, 19, 2], [7, 19, 6], [3, 19, 10], [7, 19, 14]]} /></Ctl>
              <VSep $ml={4} />
              <Ctl $w={34}><IndentIcon out /></Ctl>
              <Ctl $w={28}><IndentIcon /></Ctl>
              <VSep $ml={5} />
              <Ctl $w={30}><MergeIcon /></Ctl>
              <Ctl $w={130} $ml={3} $start>Merge &amp; Center<Spacer $w={15} /><Chevron /></Ctl>
            </ToolRow>
          </GroupBody>
          <GroupLabel $pl={9} $pr={24}>Alignment</GroupLabel>
          <Launch />
        </Group>

        <Group $w={193} $pl={9}>
          <GroupBody $col>
            <ToolRow $mt={11}><SelectBox $w={174}><span>General</span><Chevron c="#333" /></SelectBox></ToolRow>
            <ToolRow $mt={12}>
              <Ctl $w={26}><Glyph $s={21}>$</Glyph></Ctl>
              <Ctl $w={20}><Chevron /></Ctl>
              <Ctl $w={34}><Glyph $s={23}>%</Glyph></Ctl>
              <Ctl $w={26}><CommaGlyph $b $s={24} $serif>,</CommaGlyph></Ctl>
              <VSep $ml={5} />
              <Ctl $w={30}><DecIcon /></Ctl>
              <Ctl $w={32}><DecIcon inc /></Ctl>
            </ToolRow>
          </GroupBody>
          <GroupLabel $pl={9} $pr={25}>Number</GroupLabel>
          <Launch />
        </Group>

        <Group $w={239} $pl={20}>
          <GroupBody>
            <BigButton $w={70}><BigIcon><CondIcon /></BigIcon><BigLabel>Conditional</BigLabel><BigLabel>Formatting<Chevron /></BigLabel></BigButton>
            <BigButton $w={68} $ml={13}><BigIcon><TableIcon /></BigIcon><BigLabel>Format as</BigLabel><BigLabel>Table<Chevron /></BigLabel></BigButton>
            <BigButton $w={48} $ml={5}><BigIcon><StylesIcon /></BigIcon><BigLabel>Cell</BigLabel><BigLabel>Styles<Chevron /></BigLabel></BigButton>
          </GroupBody>
          <GroupLabel $pl={20}>Styles</GroupLabel>
        </Group>

        <Group $w={176} $pl={10}>
          <GroupBody>
            <BigButton $w={52}><BigIcon><InsertIcon /></BigIcon><BigLabel>Insert</BigLabel><BigLabel><Chevron /></BigLabel></BigButton>
            <BigButton $w={52}><BigIcon><DeleteIcon /></BigIcon><BigLabel>Delete</BigLabel><BigLabel><Chevron /></BigLabel></BigButton>
            <BigButton $w={52}><BigIcon><FormatIcon /></BigIcon><BigLabel>Format</BigLabel><BigLabel><Chevron /></BigLabel></BigButton>
          </GroupBody>
          <GroupLabel $pl={10}>Cells</GroupLabel>
        </Group>

        <Group $w={250} $pl={15}>
          <GroupBody>
            <SmallColumn $w={109}>
              <SmallRow $h={28}><IconSlot $w={23}><SigmaIcon /></IconSlot>AutoSum<Spacer $w={12} /><Chevron /></SmallRow>
              <SmallRow $h={28}><IconSlot $w={23}><FillDown /></IconSlot>Fill<Spacer $w={5} /><Chevron /></SmallRow>
              <SmallRow $h={30}><IconSlot $w={23}><ClearIcon /></IconSlot>Clear<Spacer $w={4} /><Chevron /></SmallRow>
            </SmallColumn>
            <BigButton $w={60}><BigIcon><SortIcon /></BigIcon><BigLabel>Sort &amp;</BigLabel><BigLabel>Filter<Chevron /></BigLabel></BigButton>
            <BigButton $w={50}><BigIcon><FindIcon /></BigIcon><BigLabel>Find &amp;</BigLabel><BigLabel>Select<Chevron /></BigLabel></BigButton>
          </GroupBody>
          <GroupLabel $pl={15}>Editing</GroupLabel>
        </Group>
        <CollapseButton><ChevronUp size={18} strokeWidth={1.4} /></CollapseButton>
      </Groups>
    </Ribbon>
  );
}

function Message() {
  return (
    <MessageBar>
      <InfoIcon />
      <Strong>GET GENUINE OFFICE</Strong>
      <MessageText>Your license isn't genuine, and you may be a victim of software counterfeiting. Avoid interruption and keep your files safe with genuine Office today.</MessageText>
      <MessageButton $w={166} $ml={11}>Get genuine Office</MessageButton>
      <MessageButton $w={117} $ml={11}>Learn more</MessageButton>
      <MessageClose><X size={14} strokeWidth={3} /></MessageClose>
    </MessageBar>
  );
}

function Formula() {
  return (
    <FormulaBar>
      <NameBox>CI65<Caret /></NameBox>
      <Dots><i /><i /><i /></Dots>
      <FxBox><X size={22} strokeWidth={1.6} /><Check size={22} strokeWidth={2} /><Fx>fx</Fx></FxBox>
      <FormulaInput><svg width="10" height="7" viewBox="0 0 10 7"><polyline points="1,1 5,5.5 9,1" fill="none" stroke="#555" strokeWidth="2" /></svg></FormulaInput>
    </FormulaBar>
  );
}

function DayStrip({ task }) {
  const [, , , letter, , , , from, to] = task;
  return DAYS.map(d => {
    const on = d.k >= from && d.k <= to;
    return (
      <DayCell key={d.k} $w={d.w} $bar={on ? BAR[letter] : undefined} $hatch={isHatched(d.k)} $hatchColor={hatchOn(letter)} $today={isToday(d.k)} $end={on && d.k === to} />
    );
  });
}

function SheetGrid() {
  return (
    <Sheet>
      <GridRow $h={10}>
        <Corner />
        {COLS.map((w, i) => <ColHead key={i} $w={w}>{colName(i)}</ColHead>)}
        {DAYS.map(d => <ColHead key={d.k} $w={d.w}>{colName(d.k + 8)}</ColHead>)}
        <ColFiller />
      </GridRow>

      <GridRow $h={8}><RowHead>1</RowHead><Plain $w={12} /><Plain $w={100} $fs={6} $c="#555">E-Ticketing</Plain></GridRow>
      <GridRow $h={7}><RowHead>2</RowHead><Plain $w={12} /><Plain $w={100}>Project Lead:Grupi11</Plain></GridRow>
      <GridRow $h={8}><RowHead>3</RowHead><Plain $w={196} $align="flex-end">Project Start:</Plain><SetupBox $w={77} $first>Tue, 3-Jan-23</SetupBox></GridRow>
      <GridRow $h={8}><RowHead>4</RowHead><Plain $w={196} $align="flex-end">Display :</Plain><SetupBox $w={77}>Daily</SetupBox></GridRow>
      <GridRow $h={7}><RowHead>5</RowHead><Plain $w={196} $align="flex-end">Display Period:</Plain><SetupBox $w={77}>1</SetupBox></GridRow>
      <Legend><i />today indicator</Legend>
      <SliderBand><i /></SliderBand>

      <GridRow $h={34}>
        <RowHead>6</RowHead>
        <Plain $w={442} />
        {DAYS.map(d => <DateCell key={d.k} $w={d.w} $holiday={HOLIDAYS.includes(d.k)} $today={isToday(d.k)}><span>{d.label}</span></DateCell>)}
      </GridRow>

      <GridRow $h={8}>
        <RowHead>7</RowHead>
        <DarkCell $w={196} $pl={14}>Task Name</DarkCell>
        <DarkCell $w={77} $pl={3}>Resource Names</DarkCell>
        <DarkCell $w={39} $align="center">COLOR</DarkCell>
        <DarkCell $w={22} $pl={3}>Progress</DarkCell>
        <DarkCell $w={37} $pl={2}>Start</DarkCell>
        <DarkCell $w={36} $pl={2}>Finish</DarkCell>
        <DarkCell $w={35} $align="center">Work days</DarkCell>
        {DAYS.map(d => <DayLetter key={d.k} $w={d.w} $holiday={HOLIDAYS.includes(d.k)} $hatch={isHatched(d.k)} $today={isToday(d.k)}>{d.letter}</DayLetter>)}
      </GridRow>

      {TASKS.map((t, i) => (
        <GridRow key={i} $h={rowHeight(i)}>
          <RowHead>{i + 8}</RowHead>
          <Cell $w={12}>{t[0]}</Cell>
          <Cell $w={184} $align="flex-start" $big={t[3] === '-'}>{t[1]}</Cell>
          <Cell $w={77}>{t[2]}</Cell>
          <Cell $w={39}>{t[3]}</Cell>
          <Cell $w={22}><DataBar>####</DataBar></Cell>
          <Cell $w={37}>{t[4]}</Cell>
          <Cell $w={36}>{t[5]}</Cell>
          <Cell $w={35}>{t[6]}</Cell>
          <DayStrip task={t} />
        </GridRow>
      ))}

      {Array.from({ length: 26 }, (_, i) => <GridRow key={i} $h={8}><RowHead>{i + 57}</RowHead></GridRow>)}
    </Sheet>
  );
}

function VerticalScroll() {
  return (
    <VScroll>
      <ScrollButton><Triangle $dir="up" /></ScrollButton>
      <VThumb />
      <VTrack />
      <ScrollButton><Triangle $dir="down" /></ScrollButton>
    </VScroll>
  );
}

function SheetTabs() {
  return (
    <TabsBar>
      <TabNav><Triangle $dir="left" /><Triangle $dir="right" /></TabNav>
      <SheetTab $w={79} $active>Sheet1</SheetTab>
      <SheetTab $w={91} $sep>Settings</SheetTab>
      <SheetTab $w={91} $sep>Holidays</SheetTab>
      <AddSheet>+</AddSheet>
      <TabDots><i /><i /><i /></TabDots>
      <HScroll>
        <HLeft>
          <HButton><Triangle $dir="left" /></HButton>
          <HThumb />
        </HLeft>
        <HButton><Triangle $dir="right" /></HButton>
      </HScroll>
    </TabsBar>
  );
}

function Status() {
  return (
    <StatusBar>
      <StatusItem>Ready</StatusItem>
      <StatusItem $ml={25}><MacroIcon /></StatusItem>
      <StatusItem $ml={22}><AccessIcon /><AccessText>Accessibility: Investigate</AccessText></StatusItem>
      <ViewButtons>
        <ViewButton $active><WinGrid /></ViewButton>
        <ViewButton><PageIcon /></ViewButton>
        <ViewButton><BreakIcon /></ViewButton>
      </ViewButtons>
      <StatusItem $ml={7} $w={8}>−</StatusItem>
      <ZoomSlider><b /><i /></ZoomSlider>
      <StatusItem $ml={6} $w={10}>+</StatusItem>
      <StatusItem $ml={16} $w={25}>25%</StatusItem>
    </StatusBar>
  );
}

function TaskbarRow() {
  return (
    <Taskbar>
      <Weather>
        <WeatherIcon />
        <WeatherText>43°F<span>Snow/ice</span></WeatherText>
      </Weather>
      <TaskIcon $w={56}><WinLogo /></TaskIcon>
      <SearchPill><SearchIcon size={19} strokeWidth={2} />Search</SearchPill>
      <TaskIcon><TaskView /></TaskIcon>
      <TaskIcon><Teams /></TaskIcon>
      <TaskIcon><Store /></TaskIcon>
      <TaskIcon $running><Chrome /></TaskIcon>
      <TaskIcon><Explorer /></TaskIcon>
      <TaskIcon><Whatsapp /><Badge>2</Badge></TaskIcon>
      <TaskIcon><IdeaIcon /></TaskIcon>
      <TaskIcon $running><ExcelIcon /></TaskIcon>
      <Tray>
        <TrayIcon $w={30}><ChevronUp size={22} strokeWidth={1.4} /></TrayIcon>
        <TrayIcon $w={36}><Wifi /></TrayIcon>
        <TrayIcon $w={26}><Speaker /></TrayIcon>
        <TrayIcon $w={34}><Battery /></TrayIcon>
        <Clock>7:08 PM<br />1/23/2023</Clock>
      </Tray>
    </Taskbar>
  );
}

export default function App() {
  return (
    <Page>
      <GlobalStyle />
      <TitleRow />
      <RibbonArea />
      <Message />
      <Formula />
      <SheetArea>
        <SheetGrid />
        <VerticalScroll />
      </SheetArea>
      <SheetTabs />
      <Status />
      <TaskbarRow />
    </Page>
  );
}
